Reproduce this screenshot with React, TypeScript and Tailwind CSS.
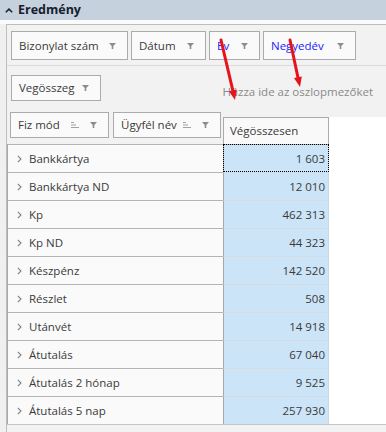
import React from "react";

const rows: [string, string][] = [
  ["Bankkártya", "1 603"],
  ["Bankkártya ND", "12 010"],
  ["Kp", "462 313"],
  ["Kp ND", "44 323"],
  ["Készpénz", "142 520"],
  ["Részlet", "508"],
  ["Utánvét", "14 918"],
  ["Átutalás", "67 040"],
  ["Átutalás 2 hónap", "9 525"],
  ["Átutalás 5 nap", "257 930"],
];

function Funnel() {
  return (
    <svg width="7" height="6" viewBox="0 0 7 6" className="shrink-0">
      <path d="M0 0H7L4.3 3V6H2.7V3Z" fill="#8c8c8c" />
    </svg>
  );
}

function SortIcon() {
  return (
    <svg width="8" height="6" viewBox="0 0 8 6" className="shrink-0">
      <rect x="0" y="0" width="3" height="1" fill="#a0a0a0" />
      <rect x="0" y="2.5" width="5" height="1" fill="#a0a0a0" />
      <rect x="0" y="5" width="8" height="1" fill="#a0a0a0" />
    </svg>
  );
}

// field button in the pivot header areas
function Field({
  label,
  w,
  h = "h-[29px]",
  blue = false,
  sort = false,
}: {
  label: string;
  w: string;
  h?: string;
  blue?: boolean;
  sort?: boolean;
}) {
  return (
    <div
      className={`${w} ${h} shrink-0 flex items-center justify-between pl-[7px] pr-[11px] border border-[#ababab] bg-[#fafafa]`}
    >
      <span className={blue ? "text-[#1a1aff]" : "text-[#3a3a3a]"}>{label}</span>
      <div className="flex items-center gap-[11px]">
        {sort && <SortIcon />}
        <Funnel />
      </div>
    </div>
  );
}

export default function App() {
  return (
    <div
      className="relative w-[386px] h-[432px] overflow-hidden bg-[#f0f0f0] text-[11.5px] text-[#3a3a3a]"
      style={{ fontFamily: '"Open Sans", "Noto Sans", sans-serif' }}
    >
      {/* panel title */}
      <div className="h-[20px] bg-[#c5d1dd] flex items-center pl-[5px] gap-[5px]">
        <svg width="8" height="5" viewBox="0 0 8 5">
          <polyline points="0.8,4.3 4,1.2 7.2,4.3" fill="none" stroke="#1a2433" strokeWidth="1.6" />
        </svg>
        <span className="font-bold text-[12.5px] text-[#16202e]">Eredmény</span>
      </div>
      <div className="h-[4px] bg-[#fbfbfb]" />

      <div className="ml-[6px] border-t border-l border-[#bdbdbd] bg-[#f2f2f2]">
        {/* filter area */}
        <div className="flex gap-[3px] pl-[4px] pt-[6px] pb-[5px] border-b border-[#dadada]">
          <Field label="Bizonylat szám" w="w-[117px]" />
          <Field label="Dátum" w="w-[75px]" />
          <Field label="Év" w="w-[51px]" blue />
          <Field label="Negyedév" w="w-[93px]" blue />
        </div>

        {/* data / column area */}
        <div className="flex justify-between h-[46px] pl-[4px] pt-[9px]">
          <Field label="Vegösszeg" w="w-[90px]" h="h-[26px]" />
          <span className="pt-[8px] pr-[13px] text-[#8a8a8a]">Húzza ide az oszlopmezőket</span>
        </div>

        {/* row fields + column header */}
        <div className="flex items-end h-[32px]">
          <div className="w-[216px] flex gap-[4px] pl-[3px] pb-[6px]">
            <Field label="Fiz mód" w="w-[99px]" h="h-[26px]" sort />
            <Field label="Ügyfél név" w="w-[108px]" h="h-[26px]" sort />
          </div>
          <div className="flex-1 h-[27px] bg-white">
            <div className="w-[106px] h-full border border-b-0 border-[#ababab] bg-[#f9f9f9] flex items-center pl-[6px]">
              Végösszesen
            </div>
          </div>
        </div>

        {/* rows */}
        <div className="bg-white">
          {rows.map(([name, value], i) => (
            <div key={name} className="flex h-[28px]">
              <div className="w-[216px] border-l border-l-[#a8a8a8] border-t border-t-[#b4b4b4] bg-[#fafafa] flex items-center pl-[9px] gap-[7px]">
                <svg width="5" height="8" viewBox="0 0 5 8">
                  <polyline points="0.8,0.8 4,4 0.8,7.2" fill="none" stroke="#808080" strokeWidth="1.1" />
                </svg>
                <span>{name}</span>
              </div>
              <div
                className={`w-[106px] border-l border-l-[#a8a8a8] border-r border-r-[#c9d6e2] border-t ${
                  i === 0 ? "border-t-[#ababab]" : "border-t-[#d3dbe3]"
                } bg-[#cce4f7] flex items-center justify-end pr-[3px] ${
                  i === 0 ? "outline outline-1 outline-dotted outline-black -outline-offset-1" : ""
                }`}
              >
                {value}
              </div>
            </div>
          ))}
        </div>
        <div className="h-[10px] border-t border-[#c6c6c6] bg-[#f2f2f2]" />
      </div>

      {/* red annotation arrows */}
      <svg className="absolute inset-0 pointer-events-none" width="386" height="432">
        <line x1="221" y1="40" x2="232.8" y2="90.3" stroke="#e5141b" strokeWidth="3" strokeLinecap="round" />
        <polygon points="235,100 236.7,89.4 228.9,91.2" fill="#e5141b" />
        <line x1="290" y1="40" x2="297.9" y2="77.2" stroke="#e5141b" strokeWidth="3" strokeLinecap="round" />
        <polygon points="300,87 301.8,76.4 294,78" fill="#e5141b" />
      </svg>
    </div>
  );
}
